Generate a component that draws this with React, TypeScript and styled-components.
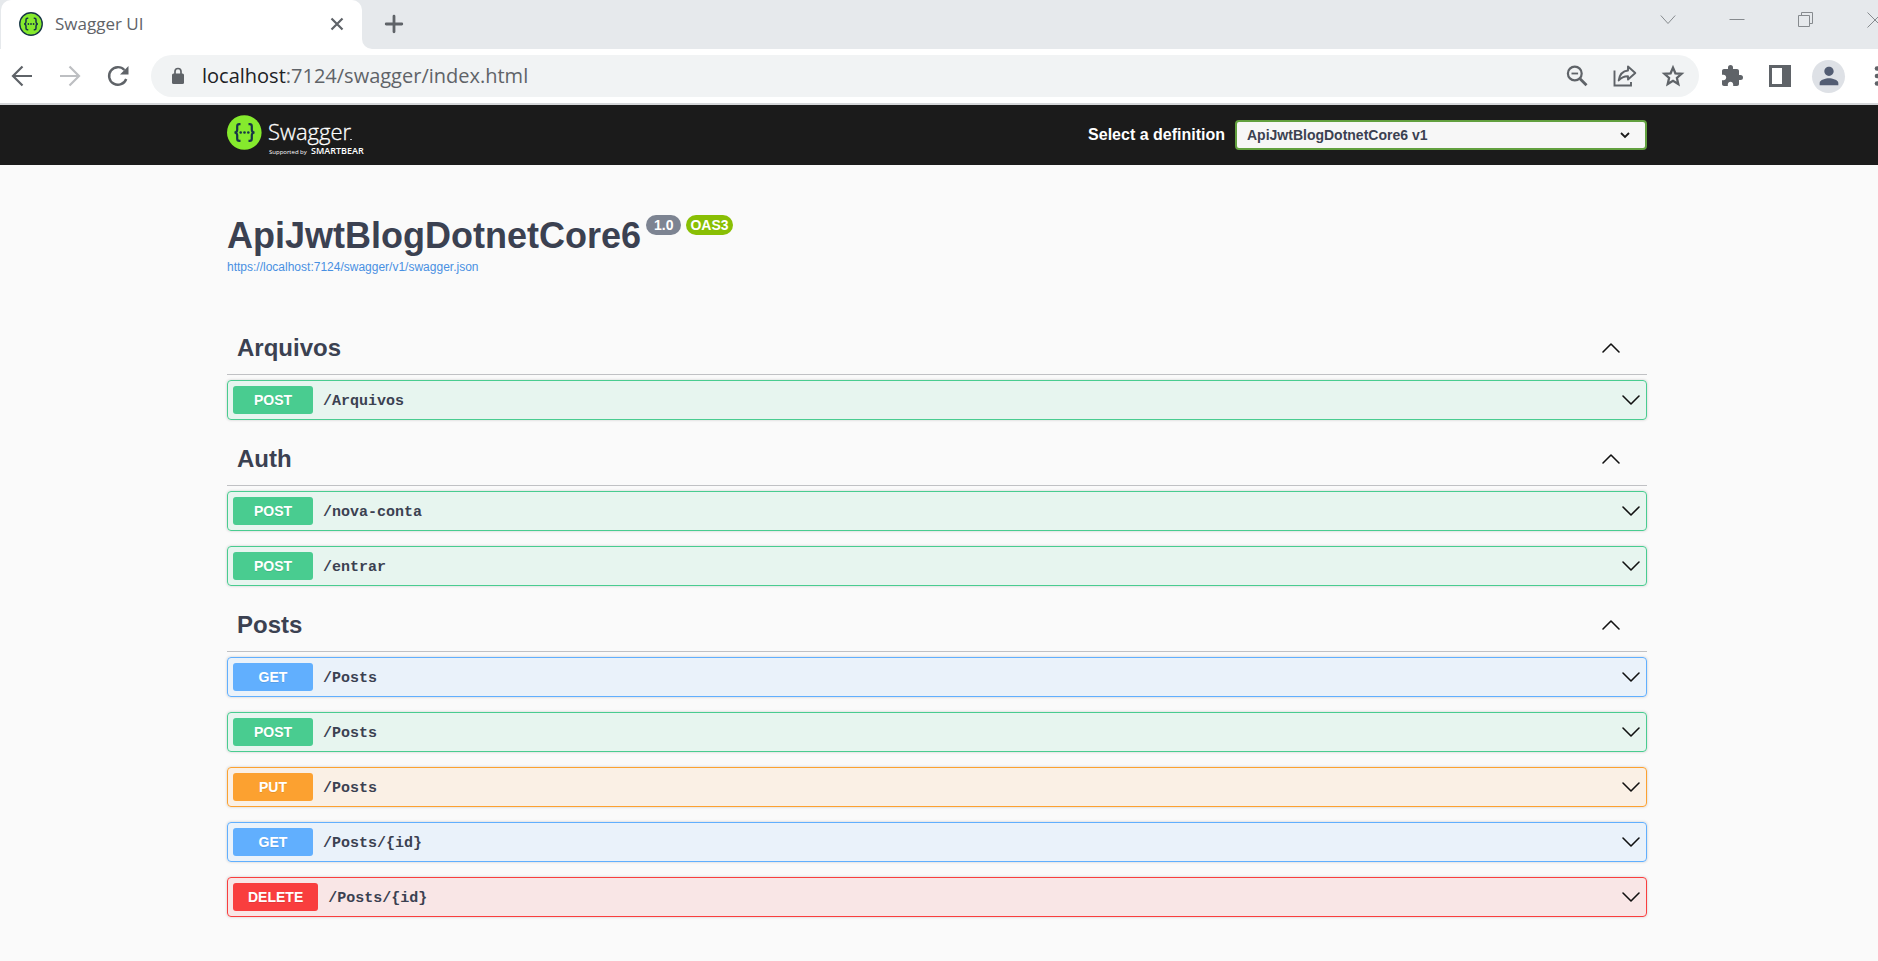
import React from "react";
import styled, { createGlobalStyle } from "styled-components";

const GlobalStyle = createGlobalStyle`
  * { box-sizing: border-box; }
  body { margin: 0; background: #fafafa; color: #3b4151; font-family: "Liberation Sans", Arial, sans-serif; overflow-x: hidden; }
  button, select { font-family: inherit; }
  h1, h2 { margin: 0; }
`;

const uiFont = `"Open Sans", "Segoe UI", sans-serif`;

const Window = styled.div`
  min-height: 100vh;
  overflow: hidden;
`;

const PlainButton = styled.button`
  display: flex;
  align-items: center;
  justify-content: center;
  padding: 0;
  border: 0;
  background: none;
  color: inherit;
  cursor: pointer;
`;

const TabStrip = styled.div`
  display: flex;
  align-items: stretch;
  height: 49px;
  background: #e6e9ec;
  color: #5f6368;
`;

const Tab = styled.div`
  display: flex;
  align-items: center;
  width: 361px;
  margin-left: 1px;
  padding: 0 18px 2px;
  gap: 12px;
  background: #fff;
  border-radius: 10px 10px 0 0;
  font: 17px/24px ${uiFont};
`;

const TabTitle = styled.span`
  flex: 1;
`;

const TabSide = styled.div`
  flex: 1;
  display: flex;
  align-items: center;
  justify-content: space-between;
  border-bottom-left-radius: 10px;
  background: #e6e9ec;
  padding: 0 0 2px 22px;
`;

const TabSideBack = styled.div`
  display: flex;
  flex: 1;
  background: #fff;
`;

const WindowButtons = styled.div`
  display: flex;
  align-items: center;
  gap: 53px;
  padding-bottom: 8px;
  margin-right: -5px;
  color: #868a8e;
`;

const Toolbar = styled.div`
  display: flex;
  align-items: center;
  height: 56px;
  padding-left: 10px;
  background: #fff;
  border-bottom: 2px solid #d5d7d9;
  color: #5f6368;
`;

const NavButtons = styled.div`
  display: flex;
  gap: 24px;
  margin-right: 21px;
`;

const AddressBar = styled.div`
  flex: 1;
  display: flex;
  align-items: center;
  height: 42px;
  padding: 0 14px 0 20px;
  border-radius: 21px;
  background: #f1f3f4;
`;

const Address = styled.div`
  flex: 1;
  margin-left: 17px;
  font: 20px/28px ${uiFont};
  b { color: #202124; font-weight: 400; }
`;

const AddressActions = styled.div`
  display: flex;
  gap: 24px;
`;

const ToolbarActions = styled.div`
  display: flex;
  align-items: center;
  gap: 24px;
  margin: 0 -11px 0 21px;
`;

const Avatar = styled.span`
  display: flex;
  align-items: center;
  justify-content: center;
  width: 33px;
  height: 33px;
  margin: 0 -4px;
  border-radius: 50%;
  background: #dee1e6;
  color: #535d73;
`;

const Wrapper = styled.div`
  max-width: 1460px;
  margin: 0 auto;
  padding: 0 22px 0 18px;
`;

const TopBar = styled.header`
  background: #1b1b1b;
`;

const TopBarInner = styled(Wrapper)`
  display: flex;
  align-items: center;
  justify-content: space-between;
  height: 60px;
`;

const LogoLink = styled.a`
  display: flex;
`;

const Definition = styled.label`
  display: flex;
  align-items: center;
  gap: 10px;
  color: #fff;
  font-size: 16px;
  font-weight: 700;
`;

const SelectBox = styled.span`
  display: grid;
  align-items: center;
  > * { grid-area: 1 / 1; }
  > svg { justify-self: end; margin-right: 16px; pointer-events: none; color: #1b1b1b; }
`;

const Select = styled.select`
  appearance: none;
  width: 412px;
  height: 30px;
  padding: 0 32px 0 10px;
  border: 2px solid #62a03f;
  border-radius: 4px;
  background: #f7f7f7;
  color: #3b4151;
  font-size: 14px;
  font-weight: 700;
`;

const Info = styled.section`
  padding: 50px 0 48px;
`;

const TitleRow = styled.div`
  display: flex;
  align-items: flex-start;
  gap: 5px;
`;

const Title = styled.h1`
  font-size: 36px;
  line-height: 42px;
`;

const Badge = styled.span<{ $green?: boolean }>`
  height: 20px;
  padding: 0 ${(p) => (p.$green ? 4 : 8)}px;
  border-radius: 10px;
  background: ${(p) => (p.$green ? "#89bf04" : "#7d8492")};
  color: #fff;
  font-size: 14px;
  line-height: 20px;
  font-weight: 700;
`;

const SpecLink = styled.a`
  display: inline-block;
  color: #4990e2;
  font-size: 12px;
  line-height: 18px;
  text-decoration: none;
`;

const GroupHeader = styled.div`
  display: flex;
  align-items: center;
  justify-content: space-between;
  height: 51px;
  margin-bottom: 5px;
  padding: 0 26px 2px 10px;
  border-bottom: 1px solid #c0c1c4;
`;

const GroupTitle = styled.h2`
  font-size: 24px;
  line-height: 28px;
`;

const palette = {
  POST: ["#49cc90", "rgba(73, 204, 144, 0.1)"],
  GET: ["#61affe", "rgba(97, 175, 254, 0.1)"],
  PUT: ["#fca130", "rgba(252, 161, 48, 0.1)"],
  DELETE: ["#f93e3e", "rgba(249, 62, 62, 0.1)"],
};
type Method = keyof typeof palette;

const Operation = styled.button<{ $method: Method }>`
  display: flex;
  align-items: center;
  width: 100%;
  height: 40px;
  margin: 0 0 15px;
  padding: 0 5px;
  border: 1px solid ${(p) => palette[p.$method][0]};
  border-radius: 4px;
  background: ${(p) => palette[p.$method][1]};
  box-shadow: 0 0 3px rgba(0, 0, 0, 0.19);
  color: #3b4151;
  text-align: left;
  cursor: pointer;
`;

const MethodTag = styled.span<{ $method: Method }>`
  min-width: 80px;
  padding: 0 15px;
  border-radius: 3px;
  background: ${(p) => palette[p.$method][0]};
  color: #fff;
  font-size: 14px;
  font-weight: 700;
  line-height: 28px;
  text-align: center;
  text-shadow: 0 1px 0 rgba(0, 0, 0, 0.1);
`;

const Path = styled.span`
  flex: 1;
  padding: 3px 10px 0;
  font: 700 15px/20px "Liberation Mono", monospace;
`;

const Chevron = ({ up }: { up?: boolean }) => (
  <svg width="20" height="12" viewBox="0 0 20 12" fill="none" stroke="#111" strokeWidth="1.6" strokeLinecap="round" strokeLinejoin="round">
    <path d={up ? "M2 10 10 2 18 10" : "M2 2 10 10 18 2"} />
  </svg>
);

const Braces = ({ color }: { color: string }) => (
  <g fill="none" stroke={color} strokeWidth="2.2">
    <path d="M13.5 9.2h-1.2q-2.1 0-2.1 2.1v3.4q0 2.4-2.6 2.8q2.6.4 2.6 2.8v3.4q0 2.1 2.1 2.1h1.2" />
    <path d="M21.5 9.2h1.2q2.1 0 2.1 2.1v3.4q0 2.4 2.6 2.8q-2.6.4-2.6 2.8v3.4q0 2.1-2.1 2.1h-1.2" />
    <g fill={color} stroke="none">
      <circle cx="13.7" cy="17.5" r="1.3" />
      <circle cx="17.5" cy="17.5" r="1.3" />
      <circle cx="21.3" cy="17.5" r="1.3" />
    </g>
  </g>
);

const Logo = () => (
  <svg width="150" height="44" viewBox="0 0 150 44" role="img" aria-label="Swagger, supported by SmartBear">
    <g transform="translate(0 2)">
      <circle cx="17.3" cy="17.5" r="17.3" fill="#85ea2d" />
      <Braces color="#173647" />
    </g>
    <g fill="#fff" fontFamily='"Open Sans", sans-serif'>
      <text x="41" y="27" fontSize="22" fontWeight="300" stroke="#fff" strokeWidth=".3">Swagger</text>
      <rect x="123" y="26" width="2" height="1" opacity=".7" />
      <text x="42" y="41" fontSize="6">Supported by</text>
      <text x="84" y="41" fontSize="9" fontWeight="600">SMARTBEAR</text>
    </g>
  </svg>
);

const Material = ({ d, size = 24 }: { d: string; size?: number }) => (
  <svg width={size} height={size} viewBox="0 0 24 24" fill="currentColor"><path d={d} /></svg>
);

const groups: { name: string; operations: [Method, string][] }[] = [
  { name: "Arquivos", operations: [["POST", "/Arquivos"]] },
  { name: "Auth", operations: [["POST", "/nova-conta"], ["POST", "/entrar"]] },
  {
    name: "Posts",
    operations: [["GET", "/Posts"], ["POST", "/Posts"], ["PUT", "/Posts"], ["GET", "/Posts/{id}"], ["DELETE", "/Posts/{id}"]],
  },
];

const BrowserChrome = () => (
  <>
    <TabStrip>
      <Tab>
        <svg width="24" height="24" viewBox="0 0 35 35">
          <circle cx="17.5" cy="17.5" r="16.4" fill="#85ea2d" stroke="#173647" strokeWidth="2" />
          <Braces color="#173647" />
        </svg>
        <TabTitle>Swagger UI</TabTitle>
        <PlainButton aria-label="Close tab">
          <svg width="14" height="14" viewBox="0 0 14 14" stroke="currentColor" strokeWidth="2.2"><path d="M1.5 1.5l11 11M12.5 1.5l-11 11" /></svg>
        </PlainButton>
      </Tab>
      <TabSideBack>
        <TabSide>
          <PlainButton aria-label="New tab">
            <svg width="20" height="20" viewBox="0 0 20 20" stroke="currentColor" strokeWidth="2.8" strokeLinecap="round"><path d="M10 2.2v15.6M2.2 10h15.6" /></svg>
          </PlainButton>
          <WindowButtons>
            <PlainButton aria-label="Search tabs">
              <svg width="16" height="16" viewBox="0 0 16 16" fill="none" stroke="currentColor"><path d="M.8 3.5 8 11.500 15.200 3.500" /></svg>
            </PlainButton>
            <PlainButton aria-label="Minimize">
              <svg width="16" height="16" viewBox="0 0 16 16" stroke="currentColor"><path d="M.5 7.500h15" /></svg>
            </PlainButton>
            <PlainButton aria-label="Restore">
              <svg width="16" height="16" viewBox="0 0 16 16" fill="none" stroke="currentColor"><path d="M.5 3.500h11v11H.5zM3.500 3.500v-3h11v11h-3" /></svg>
            </PlainButton>
            <PlainButton aria-label="Close window">
              <svg width="16" height="16" viewBox="0 0 16 16" stroke="currentColor"><path d="M.5.5l15 15M15.500.5l-15 15" /></svg>
            </PlainButton>
          </WindowButtons>
        </TabSide>
      </TabSideBack>
    </TabStrip>
    <Toolbar>
      <NavButtons>
        <PlainButton aria-label="Back">
          <svg width="24" height="24" viewBox="0 0 24 24" fill="none" stroke="currentColor" strokeWidth="2.2"><path d="M22 12H3.5M12.5 2.5 3 12l9.5 9.5" /></svg>
        </PlainButton>
        <PlainButton aria-label="Forward">
          <svg width="24" height="24" viewBox="0 0 24 24" fill="none" stroke="#bdbfc2" strokeWidth="2.2"><path d="M2 12h18.500M11.500 2.500 21 12l-9.500 9.500" /></svg>
        </PlainButton>
        <PlainButton aria-label="Reload">
          <svg width="24" height="24" viewBox="0 0 24 24" fill="none" stroke="currentColor" strokeWidth="2.400"><path d="M20.200 15a8.800 8.800 0 1 1-1.800-9" /><path d="M22.500 2v8.500H14z" fill="currentColor" stroke="none" /></svg>
        </PlainButton>
      </NavButtons>
      <AddressBar>
        <svg width="14" height="18" viewBox="0 0 14 18"><rect x="1" y="6.500" width="12" height="10.500" rx="1.500" fill="currentColor" /><path d="M4 7V4.500a3 3 0 0 1 6 0V7" fill="none" stroke="currentColor" strokeWidth="1.700" /></svg>
        <Address><b>localhost</b>:7124/swagger/index.html</Address>
        <AddressActions>
          <PlainButton aria-label="Zoom">
            <svg width="24" height="24" viewBox="0 0 24 24" fill="none" stroke="currentColor" strokeWidth="2.200"><circle cx="9.800" cy="9.500" r="6.900" /><path d="M15 14.700l6.500 6.500" strokeWidth="2.800" /><path d="M6.500 9.500h6.600" strokeWidth="1.800" /></svg>
          </PlainButton>
          <PlainButton aria-label="Share">
            <svg width="24" height="24" viewBox="0 0 24 24" fill="none" stroke="currentColor" strokeWidth="1.900"><path d="M1.500 6.500v15H18v-3.500" /><path d="M15 2.500 22.300 9 15 15.500V12.200c-4 0-7 1.300-9.300 4.300.8-5.500 4-9.500 9.300-10z" strokeLinejoin="round" /></svg>
          </PlainButton>
          <PlainButton aria-label="Bookmark">
            <svg width="24" height="24" viewBox="0 0 24 24" fill="none" stroke="currentColor" strokeWidth="2.300"><path d="M12 3.600l2.400 5.700 6.200.5-4.700 4.100 1.400 6.100L12 16.800 6.700 20l1.400-6.100-4.700-4.100 6.200-.5z" /></svg>
          </PlainButton>
        </AddressActions>
      </AddressBar>
      <ToolbarActions>
        <PlainButton aria-label="Extensions">
          <Material d="M20.500 11H19V7c0-1.100-.9-2-2-2h-4V3.500a2.500 2.500 0 0 0-5 0V5H4c-1.100 0-1.990.9-1.990 2v3.800H3.500c1.490 0 2.700 1.210 2.700 2.700s-1.210 2.700-2.700 2.700H2V20c0 1.100.9 2 2 2h3.800v-1.500c0-1.490 1.210-2.700 2.700-2.700s2.700 1.210 2.700 2.700V22H17c1.100 0 2-.9 2-2v-4h1.500a2.500 2.500 0 0 0 0-5z" />
        </PlainButton>
        <PlainButton aria-label="Side panel">
          <svg width="24" height="24" viewBox="0 0 24 24"><path fill="currentColor" fillRule="evenodd" d="M1 1h22v22H1zM4 4v16h10V4z" /></svg>
        </PlainButton>
        <PlainButton aria-label="Profile">
          <Avatar><Material size={28} d="M12 12c2.210 0 4-1.790 4-4s-1.790-4-4-4-4 1.790-4 4 1.790 4 4 4zm0 2c-2.670 0-8 1.340-8 4v2h16v-2c0-2.660-5.330-4-8-4z" /></Avatar>
        </PlainButton>
        <PlainButton aria-label="Menu">
          <svg width="24" height="24" viewBox="0 0 24 24" fill="currentColor"><circle cx="12" cy="4.500" r="2.300" /><circle cx="12" cy="12" r="2.300" /><circle cx="12" cy="19.500" r="2.300" /></svg>
        </PlainButton>
      </ToolbarActions>
    </Toolbar>
  </>
);

export default function App() {
  return (
    <Window>
      <GlobalStyle />
      <BrowserChrome />
      <TopBar>
        <TopBarInner>
          <LogoLink href="#"><Logo /></LogoLink>
          <Definition>
            Select a definition
            <SelectBox>
              <Select><option>ApiJwtBlogDotnetCore6 v1</option></Select>
              <svg width="12" height="8" viewBox="0 0 12 8" fill="none" stroke="currentColor" strokeWidth="1.800"><path d="M2 2l4 4 4-4" /></svg>
            </SelectBox>
          </Definition>
        </TopBarInner>
      </TopBar>
      <Wrapper as="main">
        <Info>
          <TitleRow>
            <Title>ApiJwtBlogDotnetCore6</Title>
            <Badge>1.0</Badge>
            <Badge $green>OAS3</Badge>
          </TitleRow>
          <SpecLink href="#">https://localhost:7124/swagger/v1/swagger.json</SpecLink>
        </Info>
        {groups.map((group) => (
          <section key={group.name}>
            <GroupHeader>
              <GroupTitle>{group.name}</GroupTitle>
              <PlainButton aria-label={`Collapse ${group.name}`}><Chevron up /></PlainButton>
            </GroupHeader>
            {group.operations.map(([method, path]) => (
              <Operation key={method + path} $method={method}>
                <MethodTag $method={method}>{method}</MethodTag>
                <Path>{path}</Path>
                <Chevron />
              </Operation>
            ))}
          </section>
        ))}
      </Wrapper>
    </Window>
  );
}
